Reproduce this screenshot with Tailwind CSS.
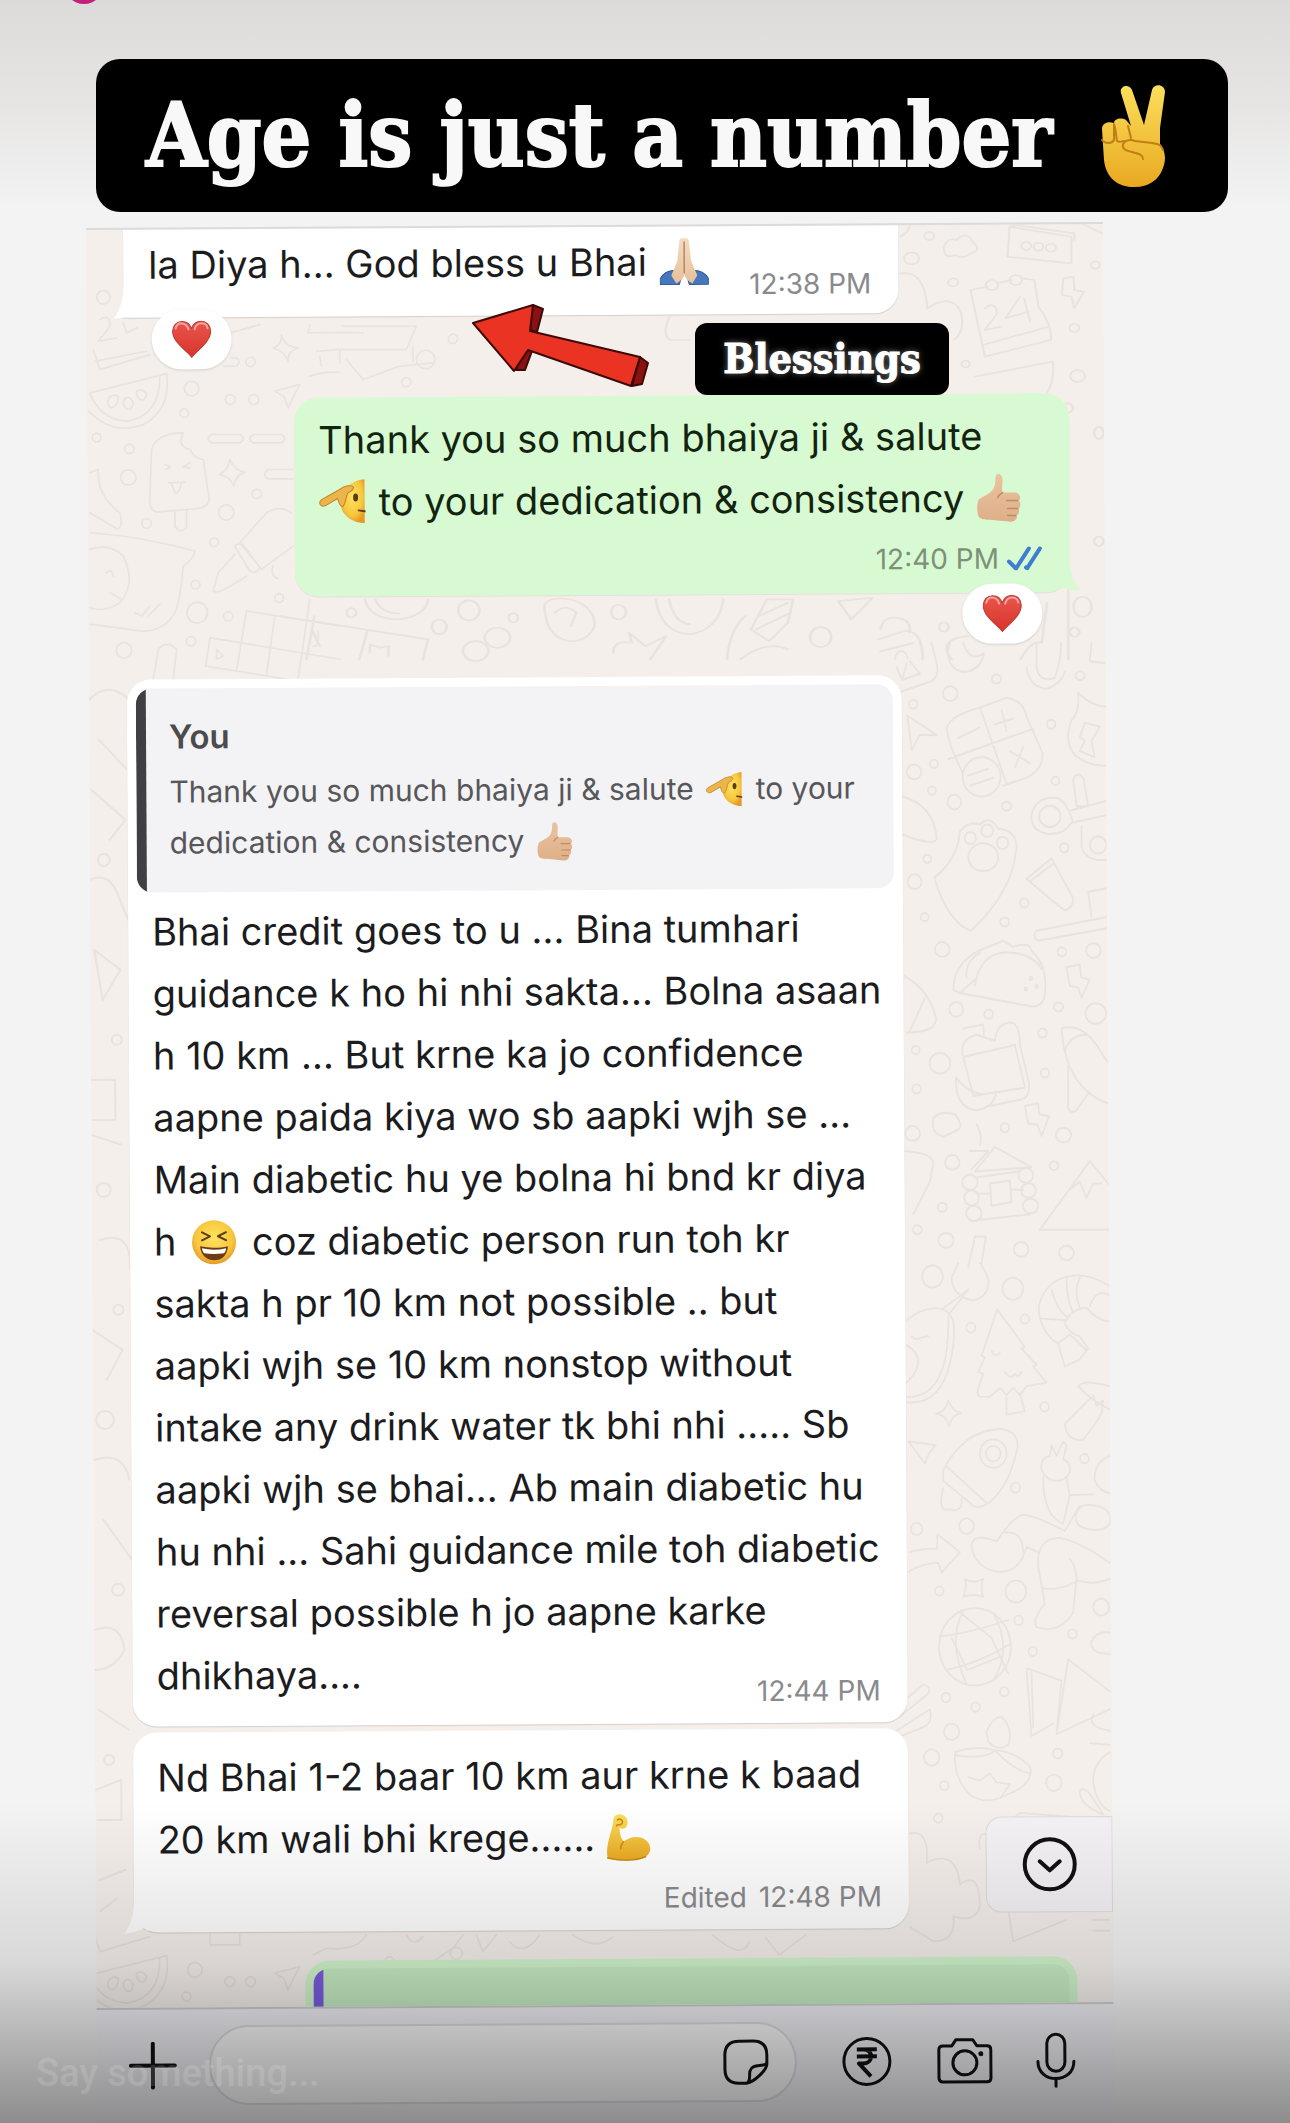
<!DOCTYPE html>
<html lang="en">
<head>
  <meta charset="UTF-8" />
  <meta name="viewport" content="width=device-width, initial-scale=1.0" />
  <title>Age is just a number</title>
  <script src="https://cdn.jsdelivr.net/npm/@tailwindcss/browser@4"></script>
</head>
<body class="relative flex min-h-screen flex-col overflow-hidden bg-[#f4f3f4] font-['Inter',sans-serif] text-[#1c1c1e]">

  <!-- Shared emoji and gradients -->
  <svg class="absolute size-0" aria-hidden="true">
    <defs>
      <linearGradient id="gold" x1="0" y1="0" x2="0" y2="1"><stop offset="0" stop-color="#fbdf5c" /><stop offset="1" stop-color="#e9a820" /></linearGradient>
      <linearGradient id="skin" x1="0" y1="0" x2="0" y2="1"><stop offset="0" stop-color="#e9c49f" /><stop offset="1" stop-color="#deaf88" /></linearGradient>
      <linearGradient id="pale" x1="0" y1="0" x2="0" y2="1"><stop offset="0" stop-color="#f3dcc0" /><stop offset="1" stop-color="#e8bf9a" /></linearGradient>
      <linearGradient id="red" x1="0" y1="0" x2="0" y2="1"><stop offset="0" stop-color="#e8564c" /><stop offset="1" stop-color="#d8332b" /></linearGradient>
      <radialGradient id="ball" cx=".5" cy=".4" r=".6"><stop offset="0" stop-color="#fde35f" /><stop offset=".7" stop-color="#f7c63e" /><stop offset="1" stop-color="#e79a25" /></radialGradient>
    </defs>
    <symbol id="heart" viewBox="0 0 40 38">
      <path d="M20 37C16 31 1 22 1 11C1 5 5 1 10.500 1C15 1 18.500 4 20 8C21.500 4 25 1 29.500 1C35 1 39 5 39 11C39 22 24 31 20 37Z" fill="url(#red)" stroke="#b93a33" stroke-width="1" />
      <path d="M4 8C5 4 8 2.500 11 3C14 3.500 16 6 17 9M23 9C24 5 27 3 30 3C33 3 35.500 5 36 8" fill="none" stroke="#f5a49d" stroke-width="2" stroke-linecap="round" />
    </symbol>
    <symbol id="thumb" viewBox="0 0 44 50">
      <path d="M2 27C5 24 14 22 17 16C20 11 18 4 20 2C22 0 26 2 26 8C26 13 25 17 26 20L38 20C44 20 45 27 42 28C45 30 44 35 42 36C43 39 42 42 40 43C41 47 37 50 32 49L13 47C9 47 4 47 2 44C0 39 0 32 2 27Z" fill="url(#skin)" />
      <path d="M41 28H30M41 36H31M39 43H31M26 20C24 21 22 22 21 25" fill="none" stroke="#c18a66" stroke-width="1.500" stroke-linecap="round" />
    </symbol>
    <symbol id="salute" viewBox="0 0 48 46">
      <path d="M46 1C32 2 22 12 22 24C22 36 32 44 46 45Z" fill="url(#ball)" />
      <ellipse cx="37" cy="19" rx="2.500" ry="4" fill="#5b3d12" />
      <path d="M40 32L46 33" stroke="#5b3d12" stroke-width="2" stroke-linecap="round" />
      <path d="M3 21L21 11C26 7 34 6 35 9C35 12 31 13 29 15C27 19 27 26 24 28C21 28 20 24 19 20L7 27C2 29-1 24 3 21Z" fill="#ebb54c" stroke="#c08527" stroke-width="1" stroke-linejoin="round" />
    </symbol>
    <symbol id="pray" viewBox="0 0 50 48">
      <path d="M1 47V41C5 34 10 33 15 33L22 40L20 47ZM49 47V41C45 34 40 33 35 33L28 40L30 47Z" fill="#4677bd" stroke="#315c9d" stroke-width="1" />
      <path d="M25 1C21 0 20 2 20 6L18 24L12 38L17 46C22 43 25 40 25 36C25 40 28 43 33 46L38 38L32 24L30 6C30 2 29 0 25 1Z" fill="url(#pale)" />
      <path d="M25 4V36" stroke="#b5876a" stroke-width="1.500" />
    </symbol>
    <symbol id="laugh" viewBox="0 0 46 46">
      <circle cx="23" cy="23" r="22" fill="url(#ball)" />
      <path d="M11 13L19 17L11 21M35 13L27 17L35 21" fill="none" stroke="#5b3d12" stroke-width="2" stroke-linecap="round" stroke-linejoin="round" />
      <path d="M9 27C18 29 28 29 37 27C36 36 31 41 23 41C15 41 10 36 9 27Z" fill="#6d3c14" />
      <path d="M11 29C19 31 27 31 35 29C35 31 34 33 33 34C26 35 20 35 13 34C12 33 11 31 11 29Z" fill="#fff" />
    </symbol>
    <symbol id="muscle" viewBox="0 0 46 48">
      <path d="M2 45C-1 32 8 16 8 6C9 1 15 0 19 3C23 6 23 12 20 15C17 17 15 15 14 15C14 20 15 25 18 29C24 24 34 22 41 28C46 33 46 40 40 44C29 49 10 48 2 45Z" fill="url(#gold)" />
      <path d="M12 7C15 5 19 8 16 11C15 13 12 11 11 13M18 29C16 31 15 33 15 36M2 45C15 48 30 48 40 44" fill="none" stroke="#c98a18" stroke-width="1.500" stroke-linecap="round" />
    </symbol>
    <symbol id="peace" viewBox="0 0 66 104">
      <path d="M2 45C2 39 8 37 14 39C14 35 21 33 26 36L31 42L21 9C19 2 29-1 32 6L44 41L52 6C54-1 65 0 65 8L60 44V60C66 68 66 76 63 84C59 97 46 104 33 103C18 103 6 94 4 76Z" fill="url(#gold)" />
      <path d="M14 40V56C12 60 5 60 2 56M28 42L31 54M23 60C25 56 30 55 35 57L52 59C58 60 61 60 63 66M23 60C22 65 26 67 32 68C38 70 43 70 43 75M14 40C16 46 16 52 17 57C20 59 22 57 24 57" fill="none" stroke="#c07f16" stroke-width="2" stroke-linecap="round" />
    </symbol>
  </svg>

  <div class="pointer-events-none absolute inset-x-0 top-0 h-[210px] bg-linear-to-b from-[#dcdbd9] via-[#e6e5e4] to-[#f4f3f4]"></div>
  <div class="absolute -top-[36px] left-16 size-10 rounded-full bg-[#c2207e]"></div>

  <!-- Title sticker -->
  <header class="relative pt-[59px] pr-[62px] pl-24">
    <div class="flex h-[153px] items-center justify-between rounded-3xl bg-black pr-[62px] pl-[50px]">
      <h1 class="font-['DejaVu_Serif_Condensed','DejaVu_Serif',serif] text-[87px] leading-none font-bold whitespace-nowrap text-[#f8f8f8] [-webkit-text-stroke:2px_#f8f8f8]">Age is just a number</h1>
      <svg class="h-[104px] w-[66px] shrink-0"><use href="#peace" /></svg>
    </div>
  </header>

  <!-- Chat -->
  <main class="relative mt-4 -mb-2 ml-[86px] flex w-full max-w-[1017px] flex-1 origin-top-left rotate-[-0.34deg] flex-col">

    <section class="relative h-[1780px] overflow-hidden border-t-2 border-[#dcdadb] bg-[#f4efeb]">
      <!-- Wallpaper doodles -->
      <svg class="absolute inset-0 size-full" fill="none" stroke="#e9e2dd" stroke-width="5" stroke-linejoin="round" stroke-linecap="round" aria-hidden="true">
        <g transform="rotate(.34) translate(794 413) scale(.333 .408)">
          <path d="M50 60L66 90L80 50M46 40a18 18 0 1 1 36 -4M70 90L120 75L90 45M0 20L100 0M60 120L150 95Q180 85 170 50L155 0M210 0C190 50 230 75 265 70Q305 60 312 25Q270 50 250 0M470 0V60Q480 100 525 85Q545 40 543 0M440 60Q450 110 500 112Q545 100 555 70M635 0L630 45L690 50" />
          <path d="M82 178L170 226L120 225L95 262ZM200 210Q205 180 300 158L380 134Q430 140 440 180L488 270Q490 310 440 330L370 350M200 210Q210 260 250 320M300 158L380 345M205 285L460 210M235 233L298 208M345 200L400 185M365 165L380 215M390 265L450 295M430 255L405 305M265 325L325 308M270 350L340 330" />
          <ellipse cx="305" cy="328" rx="57" ry="48" />
          <path d="M240 460Q270 435 300 445Q330 420 355 455Q410 460 410 500Q400 610 272 706Q200 680 163 575Q235 530 240 460Z" /><ellipse cx="310" cy="525" rx="45" ry="34" /><ellipse cx="271" cy="478" rx="17" ry="15" /><ellipse cx="322" cy="460" rx="18" ry="15" /><ellipse cx="368" cy="490" rx="17" ry="15" />
          <path d="M595 122Q640 160 690 155M595 122Q600 170 575 190Q550 240 585 275Q630 305 690 300M615 195L660 205L635 240L645 280L600 265L615 240L600 230ZM580 335Q595 310 612 335L625 400L590 400ZM575 410L690 385M580 440L690 420M575 440Q555 470 505 468Q450 460 455 420Q470 375 530 380Q560 385 580 440M605 450V500Q620 540 690 530" /><ellipse cx="510" cy="425" rx="32" ry="26" /><ellipse cx="655" cy="495" rx="25" ry="21" />
          <path d="M440 578L515 528L580 625Q580 650 555 655L530 640ZM450 585L522 540M470 705L690 670M475 730L690 698M470 705Q455 720 475 730M625 610L635 670M625 610L690 600M65 375Q165 400 170 480Q165 495 100 480L65 468" />
          <path d="M220 850Q220 770 340 740L370 730L400 745Q450 730 455 755Q505 790 495 860Q490 895 450 890L240 858ZM285 840Q300 760 380 758Q460 760 485 800M260 820Q255 780 300 760M240 858L285 825" /><circle cx="453" cy="822" r="4" /><circle cx="438" cy="848" r="4" /><circle cx="470" cy="842" r="4" />
          <path d="M560 795L600 788L604 820L630 825L605 870L595 845L570 840ZM435 1135L475 1128L478 1155L508 1160L485 1208L472 1180L445 1178ZM250 1015L405 985L435 1090L280 1110ZM248 1010Q240 970 290 960L345 975Q350 930 395 930Q420 935 420 985L448 1080Q450 1120 415 1120L330 1135M250 945L310 935L312 960M228 1065Q225 1140 290 1145Q340 1140 350 1100Q280 1120 228 1065M70 815Q150 850 168 920Q170 955 80 955M90 950L135 870" />
          <path d="M545 945Q600 930 650 985L690 1035M545 945Q550 1000 570 1040Q610 1110 690 1130M555 1000Q570 960 620 960M565 1035V1140Q575 1155 590 1145L625 1105M160 1165Q180 1145 225 1155Q255 1185 230 1195L190 1210Q150 1200 160 1165M70 1245Q160 1250 160 1275L150 1320L100 1400" />
          <path d="M270 1245L325 1245L275 1290M285 1295L345 1235L455 1285ZM285 1310L420 1295M290 1350H330M395 1340H430M290 1415L450 1400M330 1325L390 1318L395 1370L335 1380ZM480 1438L630 1270L690 1330M480 1438H690M570 1340L600 1320L620 1360L640 1325L665 1325M285 1455H318L305 1520M285 1455L265 1530M290 1180Q310 1210 300 1230" />
          <ellipse cx="270" cy="1322" rx="23" ry="19" /><ellipse cx="275" cy="1360" rx="22" ry="19" /><ellipse cx="282" cy="1398" rx="23" ry="19" /><ellipse cx="438" cy="1305" rx="22" ry="18" /><ellipse cx="446" cy="1342" rx="22" ry="18" /><ellipse cx="452" cy="1380" rx="23" ry="18" />
          <g><ellipse cx="211" cy="124" rx="22" ry="18" /><ellipse cx="350" cy="88" rx="14" ry="11" /><ellipse cx="100" cy="150" rx="13" ry="11" /><ellipse cx="102" cy="316" rx="22" ry="18" /><ellipse cx="162" cy="296" rx="12" ry="10" /><ellipse cx="156" cy="362" rx="12" ry="10" /><ellipse cx="223" cy="390" rx="21" ry="18" /><ellipse cx="380" cy="400" rx="14" ry="11" /><ellipse cx="514" cy="199" rx="13" ry="11" /><ellipse cx="527" cy="338" rx="12" ry="10" /><ellipse cx="601" cy="80" rx="14" ry="11" /><ellipse cx="553" cy="502" rx="13" ry="11" /><ellipse cx="142" cy="529" rx="12" ry="10" /><ellipse cx="104" cy="585" rx="21" ry="18" /><ellipse cx="433" cy="637" rx="13" ry="11" /><ellipse cx="374" cy="684" rx="13" ry="11" /><ellipse cx="134" cy="672" rx="12" ry="10" /><ellipse cx="187" cy="751" rx="22" ry="18" /><ellipse cx="546" cy="757" rx="13" ry="11" /><ellipse cx="641" cy="754" rx="22" ry="18" /><ellipse cx="229" cy="898" rx="21" ry="18" /><ellipse cx="326" cy="910" rx="13" ry="11" /><ellipse cx="536" cy="892" rx="14" ry="11" /><ellipse cx="648" cy="908" rx="31" ry="25" /><ellipse cx="488" cy="956" rx="13" ry="11" /><ellipse cx="495" cy="1054" rx="13" ry="11" /><ellipse cx="180" cy="1030" rx="31" ry="25" /><ellipse cx="107" cy="998" rx="12" ry="10" /><ellipse cx="110" cy="1093" rx="13" ry="11" /><ellipse cx="98" cy="1202" rx="22" ry="18" /><ellipse cx="375" cy="1188" rx="13" ry="11" /><ellipse cx="551" cy="1206" rx="23" ry="18" /><ellipse cx="217" cy="1273" rx="22" ry="18" /><ellipse cx="523" cy="1281" rx="13" ry="11" /><ellipse cx="187" cy="1383" rx="14" ry="11" /><ellipse cx="112" cy="1438" rx="13" ry="11" /><ellipse cx="198" cy="1464" rx="23" ry="18" /><ellipse cx="424" cy="1486" rx="22" ry="18" /><ellipse cx="560" cy="1495" rx="22" ry="18" /></g>
        </g>
        <g transform="rotate(.34) translate(794 1033) scale(.333 .357)">
          <path d="M300 0Q330 40 325 60Q320 100 275 105Q215 90 215 40L235 0M185 130L265 75L210 140M80 160Q150 110 200 135Q240 160 210 280Q180 400 80 390M205 150Q210 380 80 375M95 205Q110 220 120 210L145 205M80 230Q150 270 80 335" />
          <path d="M352 130L435 235L425 240L470 285L460 290L500 335L440 345L420 370L400 350L380 370L360 350L330 375L300 375Q290 370 295 350L310 310L295 305L315 265L305 260ZM380 372V425L435 415L420 365M335 245Q345 270 360 250M375 305Q390 330 405 310Q415 325 425 305" />
          <path d="M690 65Q600 10 520 55Q465 100 480 155Q500 210 535 225L555 290L600 270L625 240L600 205Q570 200 555 170Q570 130 620 125Q650 160 690 165M690 90Q650 70 630 120M600 40Q580 80 600 125M560 45Q560 100 580 140M515 75Q530 130 560 150M480 155L555 160M535 225L570 200L620 245" />
          <path d="M205 385Q215 415 245 420Q215 425 208 458Q200 425 168 422Q200 415 205 385ZM85 500L168 510Q145 530 135 562L85 500M595 345Q610 325 690 345M595 345Q640 390 690 410M630 380L555 450Q560 500 610 495Q650 450 665 420M640 370L650 400L670 385L665 420" />
          <path d="M190 580Q250 470 360 465Q420 470 412 520Q390 620 330 670Q300 690 280 680L190 610ZM200 570L320 672M190 630Q170 700 210 690Q250 700 245 660" /><circle cx="340" cy="534" r="40" /><circle cx="340" cy="534" r="22" />
          <path d="M485 580Q480 545 510 540L515 510L530 540L550 500L560 510L550 550Q575 560 570 585Q560 610 530 610Q500 610 485 580ZM490 600Q490 710 550 730L570 650L560 600M690 540Q640 560 645 610Q660 640 690 645M570 650L640 648M590 700Q600 670 650 680Q700 690 690 730Q670 755 620 745Q580 735 590 700M555 750L600 680M555 750Q470 710 430 705Q400 710 350 780Q280 755 275 790Q280 850 350 865Q420 870 440 795L475 810M375 755Q430 750 430 810M690 840Q600 780 540 770Q470 770 475 850L495 955Q455 1000 470 1020Q540 1040 580 980L590 885Q590 850 570 830M485 910Q530 920 585 895M590 888Q640 905 690 885M90 810Q120 800 172 800V760L240 810L185 868L175 840Q130 840 85 865M255 885Q280 900 310 885Q300 910 310 935Q280 925 250 935Q262 910 255 885" />
          <circle cx="285" cy="1075" r="108" /><path d="M180 1045Q260 1040 385 1000M200 1140Q300 1120 395 1065M250 975Q200 1060 260 1180M340 980Q400 1080 340 1170M215 1050L262 1140M262 1140L370 1100M235 975L335 1050L385 1150" />
          <path d="M440 1135L545 1170L530 1320L565 1110L690 1200M440 1135L455 1325L520 1290M455 1145L460 1300M530 1320L690 1250M635 1060Q650 1030 690 1035M635 1060Q630 1095 690 1095M640 1265Q620 1300 690 1310" />
          <path d="M225 1370Q290 1350 345 1365Q320 1390 230 1380ZM345 1365Q400 1365 450 1410Q465 1460 380 1490Q320 1520 270 1490Q220 1440 225 1375M345 1365Q400 1420 450 1430M265 1440L300 1450L330 1430L350 1455L390 1460L360 1500M320 1310Q350 1260 370 1275Q400 1310 385 1350Q350 1370 325 1340Q320 1320 320 1310" />
          <path d="M50 1310L150 1250Q160 1290 130 1300L50 1330M80 1220L130 1180Q160 1190 140 1210L60 1270M690 1370Q640 1400 640 1450Q650 1520 690 1535M600 1480Q610 1460 640 1500L670 1545Q600 1520 600 1480M630 1345L690 1350M345 1600L420 1540L690 1560" />
          <path d="M80 1600Q150 1580 140 1680Q230 1640 240 1740Q300 1700 300 1800Q290 1850 220 1830Q230 1900 160 1900L90 1860M300 1640Q290 1590 330 1600Q360 1560 380 1600M380 1780L400 1900L560 1840M640 1840H690M640 1870H690" />
          <g><circle cx="158" cy="38" r="31" /><circle cx="399" cy="72" r="31" /><circle cx="435" cy="157" r="13" /><circle cx="273" cy="181" r="14" /><circle cx="494" cy="403" r="13" /><circle cx="614" cy="548" r="13" /><circle cx="407" cy="629" r="14" /><circle cx="260" cy="737" r="22" /><circle cx="178" cy="919" r="13" /><circle cx="408" cy="920" r="31" /><circle cx="416" cy="1001" r="13" /><circle cx="664" cy="964" r="24" /><circle cx="578" cy="1039" r="13" /><circle cx="459" cy="1088" r="13" /><circle cx="373" cy="1201" r="13" /><circle cx="198" cy="1217" r="13" /><circle cx="287" cy="1244" r="13" /><circle cx="215" cy="1313" r="23" /><circle cx="534" cy="1374" r="14" /><circle cx="522" cy="1456" r="23" /><circle cx="155" cy="1385" r="23" /><circle cx="193" cy="1464" r="13" /><circle cx="110" cy="745" r="17" /><circle cx="175" cy="1555" r="13" /><circle cx="270" cy="1960" r="14" /></g>
        </g>
        <g transform="rotate(.34) translate(-6 53) scale(.333)">
          <path d="M40 200L60 260L210 215M45 235L200 205M60 110Q90 90 90 130L55 175L110 165M130 120L140 150L170 135M430 250H470Q485 235 470 225H455M380 170L540 125M605 155Q612 190 655 195Q622 205 625 235Q615 205 580 195Q608 185 605 155ZM690 125L685 150L780 148M710 205L780 200M720 220L725 250M690 280Q730 265 780 268M780 148L850 150M790 130H1010L980 200H760M800 230L850 290L960 250L1060 240M780 200V240M1000 190V235" />
          <path d="M30 330L260 272Q275 380 190 425Q100 460 25 385M30 330Q60 410 140 415Q240 400 240 280M85 350Q95 330 115 340Q115 370 95 375Q80 370 85 350M130 355Q145 330 160 360Q155 385 140 378Q130 370 130 355M170 325Q190 315 200 335Q195 355 180 350Q168 340 170 325" />
          <path d="M215 500Q230 450 310 450Q290 490 330 500Q345 530 370 530L388 650Q385 675 350 678L230 688Q205 680 210 640ZM285 685V730Q300 755 320 735V682M255 545L272 552L258 560M330 540L310 552L330 556M265 600L315 598M275 602Q290 660 305 600M585 325L660 305Q640 340 625 375L612 340Z" />
          <path d="M395 455H480Q500 467 480 480H395Q375 467 395 455ZM520 455H605Q625 467 605 480H520Q500 467 520 455ZM565 560H640M565 588H640M565 560Q545 574 565 588M450 530Q465 565 495 568Q465 580 462 610Q450 580 418 575Q445 565 450 530ZM480 780L560 690Q600 665 635 690M480 780L545 860L640 790M470 800Q455 780 490 785L540 855Q530 875 510 865ZM465 815L415 870L400 925Q410 940 500 880M580 850Q570 880 595 888M30 570L55 560Q50 640 120 690Q130 740 110 738L30 690" />
          <path d="M30 750Q180 760 345 805Q340 830 310 850Q300 960 285 990Q250 1050 180 1045Q80 1030 30 1025M30 800Q90 780 130 820Q170 900 120 960Q80 990 30 975M80 870Q95 855 100 880M90 930L125 950M165 990L185 1000L210 970M205 1000L240 965M500 985L780 1030M390 1065L780 1130M375 1150L780 1215M500 985L470 1165M585 1000L560 1175M690 950L655 1190M390 1065L378 1150M410 1100L430 1120L410 1130ZM220 1190L235 1100Q260 1070 290 1100L280 1190M700 1090Q720 1095 715 1045" />
          <g><circle cx="335" cy="317" r="22" /><circle cx="313" cy="391" r="13" /><circle cx="451" cy="350" r="15" /><circle cx="522" cy="350" r="15" /><circle cx="512" cy="237" r="14" /><circle cx="70" cy="43" r="20" /><circle cx="50" cy="464" r="13" /><circle cx="148" cy="498" r="14" /><circle cx="145" cy="584" r="23" /><circle cx="531" cy="633" r="14" /><circle cx="439" cy="689" r="23" /><circle cx="200" cy="722" r="14" /><circle cx="403" cy="779" r="13" /><circle cx="347" cy="906" r="13" /><circle cx="352" cy="990" r="31" /><circle cx="598" cy="946" r="13" /><circle cx="445" cy="1001" r="14" /><circle cx="132" cy="1103" r="23" /><circle cx="333" cy="1076" r="14" /><circle cx="1120" cy="168" r="14" /><circle cx="1038" cy="230" r="28" /><circle cx="980" cy="298" r="14" /></g>
        </g>
        <g transform="rotate(.34) translate(-6 1635) scale(.333)">
          <path d="M30 330L260 272Q275 380 190 425Q100 460 25 385M30 330Q60 410 140 415Q240 400 240 280M85 350Q95 330 115 340Q115 370 95 375Q80 370 85 350M130 355Q145 330 160 360Q155 385 140 378Q130 370 130 355M170 325Q190 315 200 335Q195 355 180 350Q168 340 170 325M585 325L660 305Q640 340 625 375L612 340ZM40 200L60 260L210 215M60 140L110 100M390 210V240H480V210M700 270L740 250Q830 260 860 210M980 210Q1000 250 1030 215M1060 290L1120 250L1150 210M1190 210L1210 260L1250 210M1290 230Q1330 280 1380 210M1480 210Q1550 260 1600 215M1900 210Q1990 290 2010 230M2060 220L2100 270L2180 210" />
          <circle cx="345" cy="315" r="22" /><circle cx="450" cy="350" r="15" /><circle cx="512" cy="350" r="15" /><circle cx="320" cy="395" r="13" /><circle cx="930" cy="290" r="14" /><circle cx="1130" cy="265" r="18" />
        </g>
        <!-- top right -->
        <g transform="rotate(.34) translate(559 -233) scale(.412 .333)">
          <path d="M725 750Q735 720 755 730Q780 700 795 735Q820 760 790 770Q770 790 755 775Q725 790 725 750ZM885 690L1035 720V800L880 780ZM885 690L900 685L1042 710V730M790 880L830 870M855 860L890 850M915 845L945 850L955 930Q990 990 985 1030L825 1080L790 880M820 1045L980 990M825 935Q850 910 855 950L825 1000L865 990M910 900L875 965L930 945M920 905L935 975M1015 845L1040 840L1042 880L1065 885L1042 935L1035 900L1012 895ZM620 830Q680 820 685 935Q740 890 765 940Q780 1000 750 1030M800 1140L990 1095Q995 1160 970 1200M60 960Q40 1010 60 1030H110M1045 670L1110 710M620 720Q650 700 640 670" />
          <circle cx="925" cy="748" r="12" /><circle cx="955" cy="750" r="12" /><circle cx="985" cy="753" r="12" /><circle cx="690" cy="718" r="12" /><circle cx="647" cy="785" r="18" /><circle cx="748" cy="857" r="12" /><circle cx="842" cy="865" r="15" /><circle cx="900" cy="850" r="15" /><circle cx="1093" cy="805" r="11" /><circle cx="1042" cy="994" r="12" /><circle cx="1050" cy="1138" r="18" /><circle cx="778" cy="1102" r="10" />
        </g>
        <!-- strip under the first reply -->
        <g transform="rotate(.34) translate(194 153) scale(.529 .333)">
          <path d="M160 650Q170 710 225 710Q275 700 280 650M180 650Q190 690 225 692M0 700L280 770L270 830M65 700L50 830M165 745L150 830M60 740L75 790M170 810V785L190 795L205 790V820M500 665Q510 640 550 650Q595 670 595 730Q580 780 545 775Q500 760 500 665M520 690Q540 660 560 690L550 730M710 650Q720 750 775 755Q830 740 838 650M735 650Q745 720 775 725M890 740L920 650H970L960 720L925 775ZM905 700L960 660M900 740L965 690M845 830Q850 740 880 700M870 830Q920 770 960 800M1055 655L1120 645L1080 710ZM630 810Q630 770 665 780L660 750L690 790L730 760L700 830M1135 740Q1140 700 1165 705Q1195 710 1190 750M1130 770L1180 745Q1215 740 1215 830M1270 830Q1240 770 1300 760M1400 830Q1420 770 1440 780L1450 660M1490 560V830" />
          <g><ellipse cx="135" cy="690" rx="9" ry="14" /><ellipse cx="357" cy="683" rx="20" ry="30" /><ellipse cx="301" cy="732" rx="14" ry="22" /><ellipse cx="441" cy="705" rx="9" ry="14" /><ellipse cx="640" cy="688" rx="14" ry="22" /><ellipse cx="1022" cy="763" rx="20" ry="30" /><ellipse cx="411" cy="765" rx="24" ry="30" /><ellipse cx="370" cy="805" rx="24" ry="30" /><ellipse cx="1255" cy="733" rx="9" ry="14" /><ellipse cx="1517" cy="672" rx="17" ry="30" /><ellipse cx="1502" cy="748" rx="9" ry="14" /><ellipse cx="1490" cy="75" rx="9" ry="14" /><ellipse cx="1548" cy="150" rx="9" ry="18" /><ellipse cx="1548" cy="475" rx="9" ry="14" /></g>
        </g>
        <g stroke-width="2">
          <path d="M0 470Q20 450 40 470M10 510L38 540M2 560L36 590L20 610M0 650Q20 640 30 670L38 690M4 720L30 740L12 770ZM0 850H24V890H0M0 905L30 915M8 1010Q40 1000 38 1040M0 1100L30 1120L14 1150M0 1230Q30 1220 36 1250M10 1290L38 1330M0 1400Q26 1390 30 1420Q20 1440 0 1440M4 1480L34 1500M0 1560L26 1550V1590H2M4 1650L30 1640" />
          <circle cx="14" cy="630" r="6" /><circle cx="26" cy="810" r="5" /><circle cx="12" cy="960" r="7" /><circle cx="26" cy="1080" r="5" /><circle cx="12" cy="1190" r="9" /><circle cx="24" cy="1360" r="6" /><circle cx="14" cy="1530" r="5" />
        </g>
      </svg>

      <div class="relative flex flex-col text-[38px] leading-[62px]">
        <!-- 12:38 -->
        <article class="relative ml-[37px] flex h-[88px] w-[775px] items-start justify-between rounded-br-3xl bg-white pt-1 pr-[27px] pl-[25px] shadow-[0_1px_1px_#0002]">
          <svg class="absolute -bottom-px -left-[10px] h-8 w-6" viewBox="0 0 24 32" fill="#fff"><path d="M10 0C10 14 6 24 0 32C10 31 17 28 20 26L24 30V0Z" /></svg>
          <p class="relative flex items-center gap-3 whitespace-nowrap">la Diya h... God bless u Bhai <svg class="h-12 w-[50px]"><use href="#pray" /></svg></p>
          <time class="self-end pb-[12px] text-[28px] leading-9 text-[#8a8a8e]">12:38 PM</time>
          <button class="absolute top-[80px] left-[28px] flex h-[60px] w-20 items-center justify-center rounded-full bg-white shadow-sm" aria-label="Reaction"><svg class="h-[38px] w-10"><use href="#heart" /></svg></button>
        </article>

        <!-- 12:40 -->
        <article class="relative mt-[81px] ml-[207px] flex h-[199px] w-[775px] flex-col rounded-3xl bg-[#d8fad2] pt-[11px] pr-[27px] pl-6 shadow-[0_1px_1px_#0001]">
          <svg class="absolute -right-[11px] bottom-0 h-8 w-6" viewBox="0 0 24 32" fill="#d8fad2"><path d="M13 0C13 14 17 24 24 30C15 31 8 29 5 27L0 30V0Z" /></svg>
          <p class="whitespace-nowrap text-[#12240f]">Thank you so much bhaiya ji &amp; salute</p>
          <p class="flex items-center gap-3 whitespace-nowrap text-[#12240f]"><svg class="h-[46px] w-12"><use href="#salute" /></svg>to your dedication &amp; consistency <svg class="h-[50px] w-11"><use href="#thumb" /></svg></p>
          <div class="relative flex items-center justify-end gap-2">
            <time class="text-[28px] leading-[60px] text-[#7d9179]">12:40 PM</time>
            <svg class="h-6 w-9" viewBox="0 0 36 24" fill="none" stroke="#3e7fd0" stroke-width="4" stroke-linecap="round" stroke-linejoin="round"><path d="M2 15L9 22L22 2M19 21L20 22L33 2" /></svg>
          </div>
          <button class="absolute top-[190px] left-[667px] flex h-[60px] w-20 items-center justify-center rounded-full bg-white shadow-sm" aria-label="Reaction"><svg class="h-[38px] w-10"><use href="#heart" /></svg></button>
        </article>

        <!-- 12:44 -->
        <article class="relative mt-[82px] ml-[38px] flex h-[1047px] w-[775px] flex-col rounded-3xl bg-white shadow-[0_1px_1px_#0002]">
          <blockquote class="mx-[9px] mt-[9px] flex h-[204px] shrink-0 overflow-hidden rounded-2xl bg-[#f3f2f5] text-[30px] leading-[51px] text-[#57575a]">
            <div class="mr-[23px] w-[10px] shrink-0 bg-[#404042]"></div>
            <div class="pt-[23px]">
              <cite class="block pb-1 text-[33px] font-semibold text-[#4b4b4e] not-italic">You</cite>
              <p class="flex items-center gap-3 whitespace-nowrap">Thank you so much bhaiya ji &amp; salute <svg class="h-[36px] w-[38px]"><use href="#salute" /></svg>to your</p>
              <p class="flex items-center gap-3 whitespace-nowrap">dedication &amp; consistency <svg class="h-10 w-9"><use href="#thumb" /></svg></p>
            </div>
          </blockquote>
          <p class="pt-[8px] pl-6 whitespace-nowrap">Bhai credit goes to u ... Bina tumhari<br />guidance k ho hi nhi sakta... Bolna asaan<br />h 10 km ... But krne ka jo confidence<br />aapne paida kiya wo sb aapki wjh se ...<br />Main diabetic hu ye bolna hi bnd kr diya<br />h <svg class="mx-1 inline size-[46px] align-[-10px]"><use href="#laugh" /></svg> coz diabetic person run toh kr<br />sakta h pr 10 km not possible .. but<br />aapki wjh se 10 km nonstop without<br />intake any drink water tk bhi nhi ..... Sb<br />aapki wjh se bhai... Ab main diabetic hu<br />hu nhi ... Sahi guidance mile toh diabetic<br />reversal possible h jo aapne karke<br />dhikhaya....</p>
          <time class="absolute right-[27px] bottom-[14px] text-[28px] leading-9 text-[#8a8a8e]">12:44 PM</time>
        </article>

        <!-- 12:48 -->
        <article class="relative mt-[6px] ml-[38px] flex h-[200px] w-[775px] flex-col rounded-3xl bg-white pt-[14px] pr-[27px] pl-6 shadow-[0_1px_1px_#0002]">
          <svg class="absolute -bottom-px -left-[10px] h-8 w-6" viewBox="0 0 24 32" fill="#fff"><path d="M10 0C10 14 6 24 0 32C10 31 17 28 20 26L24 30V0Z" /></svg>
          <p class="relative whitespace-nowrap">Nd Bhai 1-2 baar 10 km aur krne k baad<br />20 km wali bhi krege...... <svg class="inline h-12 w-[46px] align-[-10px]"><use href="#muscle" /></svg></p>
          <div class="flex justify-end gap-3 text-[28px] leading-[60px] text-[#8a8a8e]"><span>Edited</span><time>12:48 PM</time></div>
        </article>

        <!-- next reply, cut by the composer -->
        <article class="mt-[29px] ml-[209px] h-[120px] w-[772px] rounded-3xl bg-[#d0f5cb] p-2">
          <div class="flex h-full overflow-hidden rounded-2xl bg-[#c7edc4]"><div class="w-[10px] bg-[#7a5ce0]"></div></div>
        </article>
      </div>

      <button class="absolute right-0 bottom-[90px] flex h-24 w-[127px] items-center justify-center rounded-l-2xl border border-[#dddbdc] bg-[#f4f2f5]" aria-label="Scroll to latest">
        <svg class="size-[58px]" viewBox="0 0 58 58" fill="none" stroke="#111" stroke-width="4" stroke-linecap="round" stroke-linejoin="round"><circle cx="29" cy="29" r="25" /><path d="M19 26L29 35L39 26" /></svg>
      </button>
    </section>

    <!-- Composer -->
    <footer class="flex flex-1 items-start border-t-2 border-[#cfcfd2] bg-[#f2f1f6] pt-4 pr-[38px] pb-6 pl-[32px]">
      <button class="mt-4 shrink-0" aria-label="Attach">
        <svg class="size-12" viewBox="0 0 48 48" fill="none" stroke="#111" stroke-width="4" stroke-linecap="round"><path d="M24 2V46M2 24H46" /></svg>
      </button>
      <label class="ml-8 flex h-[80px] flex-1 items-center justify-end rounded-full border-2 border-[#dedee2] bg-[#fbfbfc] pr-[26px]">
        <input class="w-full min-w-0 bg-transparent pl-8 outline-none" aria-label="Message" />
        <svg class="h-[46px] w-[46px] shrink-0" viewBox="0 0 46 46" fill="none" stroke="#111" stroke-width="3" stroke-linecap="round" stroke-linejoin="round"><path d="M24 44H16Q2 44 2 30V16Q2 2 16 2H30Q44 2 44 16V25C44 31 31 43 24 44ZM24 44C28 42 26 36 27 32C29 26 35 27 40 26C43 26 44 25 44 22" /></svg>
      </label>
      <div class="mt-3 ml-[44px] flex w-[235px] shrink-0 items-center justify-between">
        <button aria-label="Pay">
          <svg class="size-[52px]" viewBox="0 0 52 52" fill="none" stroke="#111" stroke-width="3" stroke-linejoin="round"><circle cx="26" cy="26" r="23" /><path d="M16 14H36M16 21H36M17 14H22C33 14 33 28 22 28H18L30 41" stroke-width="4" /></svg>
        </button>
        <button aria-label="Camera">
          <svg class="h-12 w-14" viewBox="0 0 56 48" fill="none" stroke="#111" stroke-width="3" stroke-linejoin="round"><path d="M6 9H15L19 3H36L40 9H50Q54 9 54 13V41Q54 45 50 45H6Q2 45 2 41V13Q2 9 6 9Z" /><circle cx="28" cy="26" r="12" /><circle cx="44" cy="17" r="2" fill="#111" stroke-width="1" /></svg>
        </button>
        <button aria-label="Record">
          <svg class="h-14 w-10" viewBox="0 0 40 56" fill="none" stroke="#111" stroke-width="3" stroke-linecap="round"><rect x="11" y="2" width="18" height="37" rx="9" /><path d="M2 29C2 52 38 52 38 29M20 47V54" /></svg>
        </button>
      </div>
    </footer>
  </main>

  <!-- Stickers over the chat -->
  <svg class="absolute top-[300px] left-[468px] h-[92px] w-[186px]" viewBox="0 0 186 92" stroke="#3d0a0a" stroke-width="2" stroke-linejoin="round" aria-hidden="true">
    <path d="M65 5L75 9L69 32L62 30ZM56 47L64 51L57 70H48ZM172 57L180 63L174 84L164 86Z" fill="#8c1212" />
    <path d="M5 23L65 5L62 31L172 57L163 86L60 50L46 71Z" fill="#ea3323" />
  </svg>
  <div class="absolute top-[323px] left-[695px] flex h-[72px] w-[254px] items-center justify-center rounded-xl bg-black font-['DejaVu_Serif_Condensed','DejaVu_Serif',serif] text-[41px] leading-none font-bold text-white [-webkit-text-stroke:1px_#fff] [text-shadow:0_0_6px_#fff8]">Blessings</div>

  <!-- Bottom shade and comment box -->
  <div class="pointer-events-none absolute inset-x-0 bottom-0 h-[320px] bg-linear-to-b from-black/0 via-black/11 to-black/42"></div>
  <input class="absolute bottom-[24px] left-[36px] w-[320px] bg-transparent font-['Roboto',sans-serif] text-[38px] leading-[52px] font-medium outline-none placeholder:text-white/13" placeholder="Say something..." aria-label="Comment" />
</body>
</html>
